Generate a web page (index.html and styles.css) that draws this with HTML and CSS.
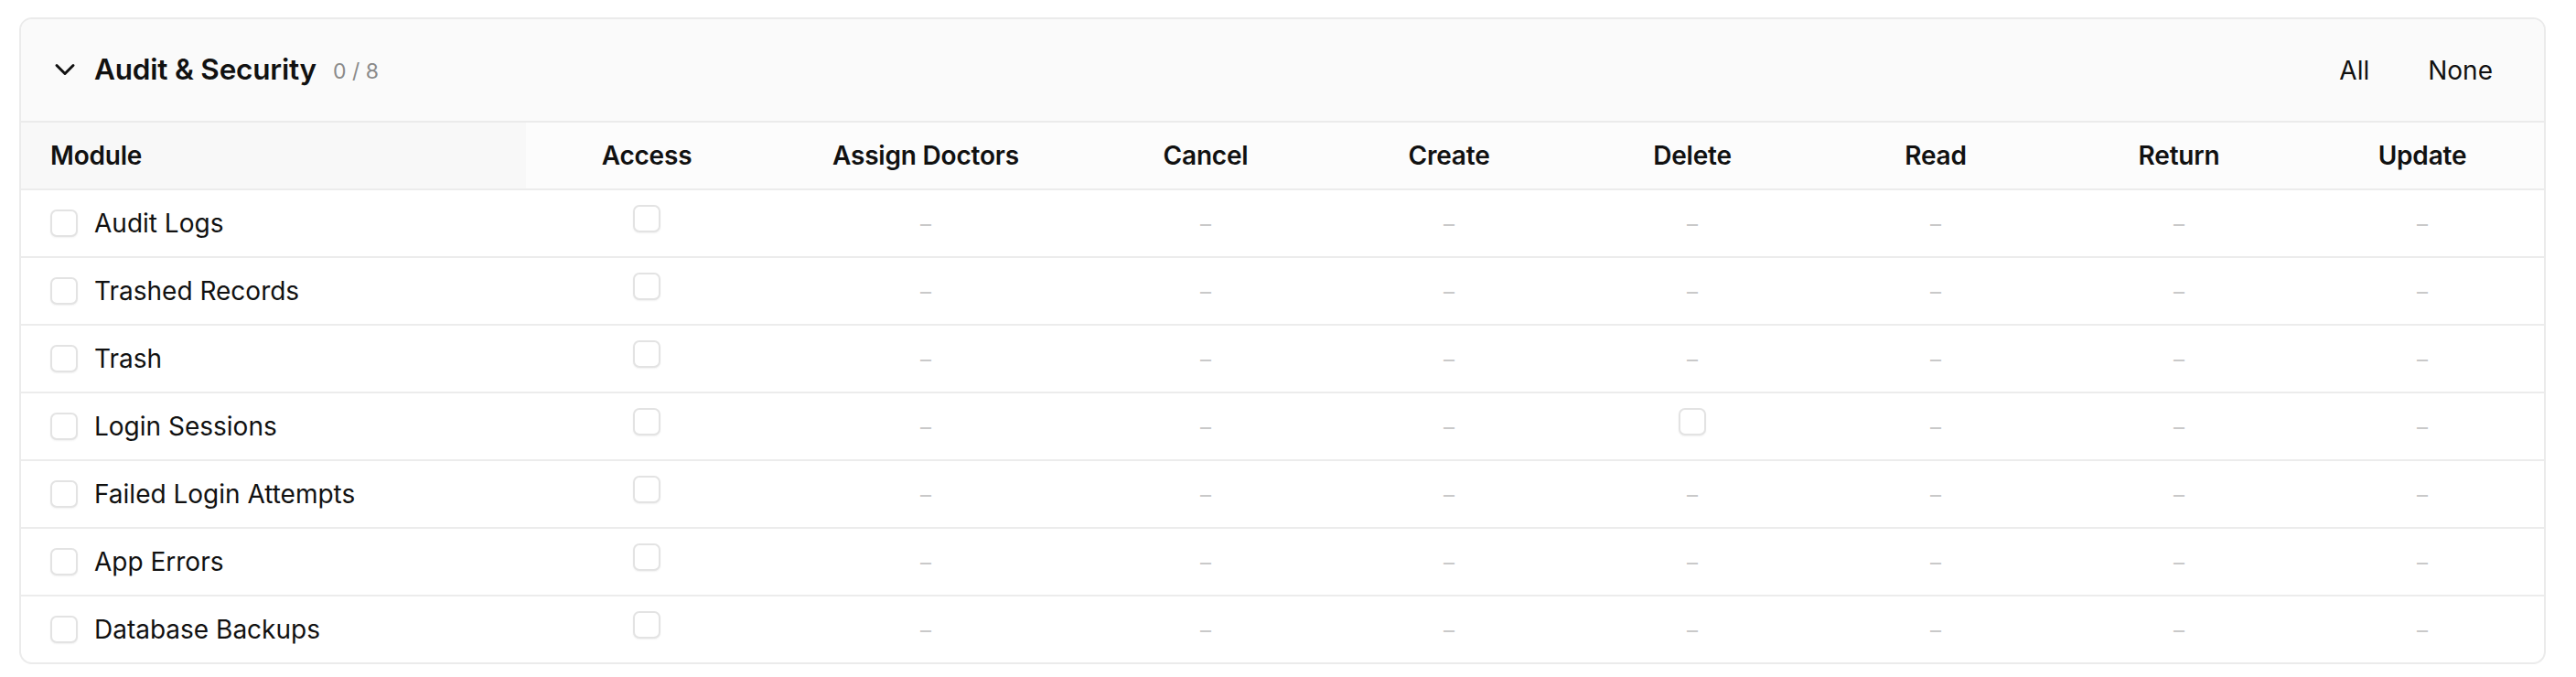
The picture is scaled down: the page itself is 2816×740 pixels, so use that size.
FILE: index.html
```html
<!DOCTYPE html>
<html>
<head>
	<meta charset="utf-8">
	<title>Permissions - Audit &amp; Security</title>
	<link rel="stylesheet" href="styles.css">
</head>
<body>
	<div class="group">
		<div class="group-head">
			<svg class="chev" viewBox="0 0 24 24" fill="none" stroke="currentColor" stroke-linecap="round" stroke-linejoin="round"><path d="m6 9 6 6 6-6"/></svg>
			<span class="group-title">Audit &amp; Security</span>
			<span class="group-count">0 / 8</span>
			<div class="group-actions">
				<button class="link-btn">All</button>
				<button class="link-btn">None</button>
			</div>
		</div>

		<div class="row row-head">
			<div class="cell mod">Module</div>
			<div class="cell">Access</div>
			<div class="cell">Assign Doctors</div>
			<div class="cell">Cancel</div>
			<div class="cell">Create</div>
			<div class="cell">Delete</div>
			<div class="cell">Read</div>
			<div class="cell">Return</div>
			<div class="cell">Update</div>
		</div>

		<div class="row">
			<div class="cell mod"><span class="box"></span>Audit Logs</div>
			<div class="cell"><span class="box up"></span></div>
			<div class="cell"><span class="na">–</span></div>
			<div class="cell"><span class="na">–</span></div>
			<div class="cell"><span class="na">–</span></div>
			<div class="cell"><span class="na">–</span></div>
			<div class="cell"><span class="na">–</span></div>
			<div class="cell"><span class="na">–</span></div>
			<div class="cell"><span class="na">–</span></div>
		</div>
		<div class="row">
			<div class="cell mod"><span class="box"></span>Trashed Records</div>
			<div class="cell"><span class="box up"></span></div>
			<div class="cell"><span class="na">–</span></div>
			<div class="cell"><span class="na">–</span></div>
			<div class="cell"><span class="na">–</span></div>
			<div class="cell"><span class="na">–</span></div>
			<div class="cell"><span class="na">–</span></div>
			<div class="cell"><span class="na">–</span></div>
			<div class="cell"><span class="na">–</span></div>
		</div>
		<div class="row">
			<div class="cell mod"><span class="box"></span>Trash</div>
			<div class="cell"><span class="box up"></span></div>
			<div class="cell"><span class="na">–</span></div>
			<div class="cell"><span class="na">–</span></div>
			<div class="cell"><span class="na">–</span></div>
			<div class="cell"><span class="na">–</span></div>
			<div class="cell"><span class="na">–</span></div>
			<div class="cell"><span class="na">–</span></div>
			<div class="cell"><span class="na">–</span></div>
		</div>
		<div class="row">
			<div class="cell mod"><span class="box"></span>Login Sessions</div>
			<div class="cell"><span class="box up"></span></div>
			<div class="cell"><span class="na">–</span></div>
			<div class="cell"><span class="na">–</span></div>
			<div class="cell"><span class="na">–</span></div>
			<div class="cell"><span class="box up"></span></div>
			<div class="cell"><span class="na">–</span></div>
			<div class="cell"><span class="na">–</span></div>
			<div class="cell"><span class="na">–</span></div>
		</div>
		<div class="row">
			<div class="cell mod"><span class="box"></span>Failed Login Attempts</div>
			<div class="cell"><span class="box up"></span></div>
			<div class="cell"><span class="na">–</span></div>
			<div class="cell"><span class="na">–</span></div>
			<div class="cell"><span class="na">–</span></div>
			<div class="cell"><span class="na">–</span></div>
			<div class="cell"><span class="na">–</span></div>
			<div class="cell"><span class="na">–</span></div>
			<div class="cell"><span class="na">–</span></div>
		</div>
		<div class="row">
			<div class="cell mod"><span class="box"></span>App Errors</div>
			<div class="cell"><span class="box up"></span></div>
			<div class="cell"><span class="na">–</span></div>
			<div class="cell"><span class="na">–</span></div>
			<div class="cell"><span class="na">–</span></div>
			<div class="cell"><span class="na">–</span></div>
			<div class="cell"><span class="na">–</span></div>
			<div class="cell"><span class="na">–</span></div>
			<div class="cell"><span class="na">–</span></div>
		</div>
		<div class="row last">
			<div class="cell mod"><span class="box"></span>Database Backups</div>
			<div class="cell"><span class="box up"></span></div>
			<div class="cell"><span class="na">–</span></div>
			<div class="cell"><span class="na">–</span></div>
			<div class="cell"><span class="na">–</span></div>
			<div class="cell"><span class="na">–</span></div>
			<div class="cell"><span class="na">–</span></div>
			<div class="cell"><span class="na">–</span></div>
			<div class="cell"><span class="na">–</span></div>
		</div>
	</div>
</body>
</html>
```

FILE: styles.css
```css
*{
	margin: 0;
	padding: 0;
	box-sizing: border-box;
}
body{
	background: #fff;
	color: #111;
	font-family: "Inter", "Liberation Sans", sans-serif;
	font-size: 28px;
}
.group{
	margin: 19px 33px 0 21px;
	border: 2px solid #ebebeb;
	border-radius: 14px;
	overflow: hidden;
}
.group-head{
	height: 113px;
	padding: 0 32px 0 30px;
	display: flex;
	align-items: center;
	background: #fafafa;
	border-bottom: 2px solid #ebebeb;
}
.chev{
	width: 36px;
	height: 36px;
	color: #111;
	stroke-width: 2;
	margin-top: -2px;
}
.group-title{
	margin-left: 14px;
	margin-top: -2px;
	font-size: 31.5px;
	font-weight: 600;
	letter-spacing: -0.2px;
}
.group-count{
	margin-left: 18px;
	font-size: 23px;
	color: #8a8a8a;
	padding-top: 2px;
}
.group-actions{
	margin-left: auto;
	display: flex;
	gap: 16px;
}
.link-btn{
	border: 0;
	background: none;
	font: inherit;
	color: #111;
	padding: 8px 24px;
	cursor: pointer;
}
.row{
	display: grid;
	grid-template-columns: 552px 264px 346px repeat(6, 1fr);
	height: 74px;
	border-bottom: 2px solid #ececec;
}
.row.last{
	height: 72px;
	border-bottom: 0;
}
.row-head{
	background: #fcfcfc;
	font-weight: 600;
	letter-spacing: -0.2px;
}
.row-head .mod{
	background: #f8f8f8;
}
.cell{
	display: flex;
	align-items: center;
	justify-content: center;
}
.cell.mod{
	justify-content: flex-start;
	padding-left: 32px;
}
.box{
	display: inline-block;
	width: 30px;
	height: 30px;
	border: 2px solid #e3e3e3;
	border-radius: 7px;
	background: #fff;
	box-shadow: 0 1px 2px rgba(0,0,0,0.06);
}
.mod .box{
	margin-right: 18px;
}
.box.up{
	margin-bottom: 10px;
}
.na{
	color: #c9c9c9;
	font-size: 24px;
}
```
